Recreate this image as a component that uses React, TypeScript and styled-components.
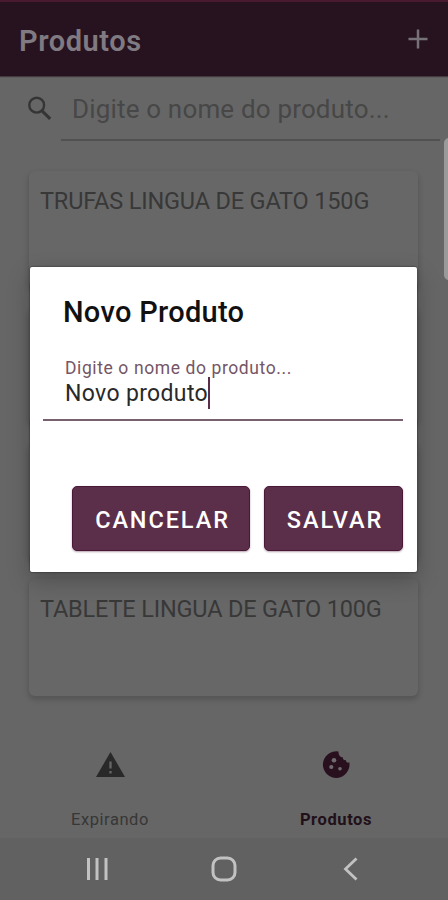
import React from "react";
import styled, { createGlobalStyle } from "styled-components";

const GlobalStyle = createGlobalStyle`
  * { box-sizing: border-box; }
  body { margin: 0; background: #666; font-family: Roboto, sans-serif; }
`;

const Screen = styled.div`
  position: relative;
  display: flex;
  flex-direction: column;
  width: 448px;
  height: 900px;
  overflow: hidden;
  background: #666;
`;

const AppBar = styled.header`
  display: flex;
  align-items: center;
  justify-content: space-between;
  flex: none;
  height: 76px;
  padding: 3px 19px 0 19px;
  border-top: 2px solid #491a2f;
  background: #26131f;
  box-shadow: 0 1px 1px #45383f;

  svg { margin-bottom: 4px; }
`;

const Title = styled.h1`
  margin: 0;
  color: #807a82;
  font-size: 29px;
  font-weight: 600;
  line-height: 36px;
  letter-spacing: 0.55px;
`;

const Search = styled.div`
  display: flex;
  flex: none;
  height: 65px;
  padding: 0 8px 0 27px;
`;

const SearchIcon = styled.svg`
  width: 26px;
  height: 26px;
  margin-top: 20px;
`;

const SearchField = styled.div`
  flex: 1;
  margin-left: 8px;
  padding: 17px 0 0 11px;
  border-bottom: 2px solid #515151;
  color: #474747;
  font-size: 26px;
  line-height: 32px;
  letter-spacing: 0.17px;
  white-space: nowrap;
`;

const ProductList = styled.main`
  display: flex;
  flex-direction: column;
  flex: none;
  gap: 19px;
  height: 555px;
  padding: 30px 30px 0 29px;
`;

const ProductCard = styled.article`
  flex: none;
  height: 117px;
  padding: 15px 11px;
  border-radius: 6px;
  background: #676767;
  box-shadow: 0 3px 5px 1px rgba(0, 0, 0, 0.16);
  color: #383838;
  font-size: 23.5px;
  line-height: 30px;
  letter-spacing: -0.17px;
  white-space: nowrap;
`;

const Tabs = styled.nav`
  display: grid;
  grid-template-columns: 220px 228px;
  flex: none;
  height: 142px;
`;

const Tab = styled.div<{ $active?: boolean }>`
  display: flex;
  flex-direction: column;
  align-items: center;
  padding: ${(p) => (p.$active ? "54px 0 0 4px" : "54px 0 0")};
  color: ${(p) => (p.$active ? "#211019" : "#373737")};
  font-size: 16.5px;
  font-weight: ${(p) => (p.$active ? 700 : 400)};
  line-height: 20px;
  letter-spacing: ${(p) => (p.$active ? "0.6px" : "0.55px")};

  svg { width: 30px; height: 30px; margin-bottom: 30px; }
`;

const SystemBar = styled.footer`
  display: flex;
  justify-content: space-between;
  align-items: center;
  flex: none;
  height: 62px;
  padding: 0 83px;
  background: #616161;

  svg { width: 28px; height: 28px; }
`;

const EdgeHandle = styled.div`
  position: absolute;
  top: 138px;
  right: -6px;
  width: 10px;
  height: 142px;
  border-radius: 6px;
  background: #9a9a9a;
`;

const Dialog = styled.section`
  position: absolute;
  top: 267px;
  left: 30px;
  width: 387px;
  height: 305px;
  padding: 28px 14px 0 13px;
  border-radius: 2px;
  background: #fff;
  box-shadow: 0 0 2px rgba(0, 0, 0, 0.7), 0 8px 22px rgba(0, 0, 0, 0.25);
`;

const DialogTitle = styled.h2`
  margin: 0 0 0 20px;
  color: #111;
  font-size: 29px;
  font-weight: 500;
  line-height: 34px;
  letter-spacing: 0.3px;
`;

const Field = styled.div`
  height: 92px;
  padding: 28px 0 0 22px;
  border-bottom: 2px solid #79606e;
`;

const FieldLabel = styled.label`
  display: block;
  color: #755566;
  font-size: 17.5px;
  line-height: 22px;
  letter-spacing: 0.6px;
`;

const FieldValue = styled.div`
  display: flex;
  align-items: center;
  height: 29px;
  color: #292929;
  font-size: 23px;
  letter-spacing: 0.35px;
`;

const Caret = styled.span`
  width: 2px;
  height: 32px;
  margin-top: -2px;
  background: #5b2d49;
`;

const Actions = styled.div`
  display: flex;
  justify-content: flex-end;
  gap: 14px;
  margin-top: 65px;
`;

const ActionButton = styled.button<{ $width: number }>`
  width: ${(p) => p.$width}px;
  height: 65px;
  padding: 2px 0 0 3px;
  border: 1px solid #4b1738;
  border-radius: 5px;
  background: #5b2e4a;
  box-shadow: 0 1px 2px rgba(70, 20, 50, 0.4);
  color: #fff;
  font: 500 23.5px/28px Roboto, sans-serif;
  letter-spacing: 1.9px;
`;

const products = ["TRUFAS LINGUA DE GATO 150G", "", "", "TABLETE LINGUA DE GATO 100G"];

export default function App() {
  return (
    <>
      <GlobalStyle />
      <Screen>
        <AppBar>
          <Title>Produtos</Title>
          <svg width="22" height="22" viewBox="0 0 22 22" stroke="#777278" strokeWidth="2.5">
            <path d="M11 1.5v19M1.5 11h19" />
          </svg>
        </AppBar>
        <Search>
          <SearchIcon viewBox="0 0 26 26" fill="none" stroke="#353535">
            <circle cx="9.7" cy="9.2" r="7.4" strokeWidth="2.4" />
            <path d="m15 14.8 8.2 8" strokeWidth="3.1" />
          </SearchIcon>
          <SearchField>Digite o nome do produto...</SearchField>
        </Search>
        <ProductList>
          {products.map((name, i) => (
            <ProductCard key={i}>{name}</ProductCard>
          ))}
        </ProductList>
        <Tabs>
          <Tab>
            <svg viewBox="0 0 30 30">
              <path d="M15.5 2 30 27H1Z" fill="#292929" />
              <path d="M15.5 11.5v7m0 2.5v2.5" stroke="#666" strokeWidth="2.3" />
            </svg>
            Expirando
          </Tab>
          <Tab $active>
            <svg viewBox="0 0 30 30">
              <path
                d="M17.5 1.5A13.3 13.3 0 1 0 28.3 12.3c-1.7 1-3.4-.1-3.5-2.2-2 .3-3.2-.9-2.9-2.9-2.7.4-4.6-2.6-4.4-5.7Z"
                fill="#28101e"
              />
              <g fill="#706b6e">
                <circle cx="13" cy="10.3" r="2.3" />
                <circle cx="10.3" cy="17" r="2.1" />
                <circle cx="19" cy="18.7" r="1.8" />
              </g>
            </svg>
            Produtos
          </Tab>
        </Tabs>
        <SystemBar>
          <svg viewBox="0 0 28 28" stroke="#c2c2c2" strokeWidth="3">
            <path d="M5.5 3v22M14 3v22M23 3v22" />
          </svg>
          <svg viewBox="0 0 28 28" fill="none" stroke="#c2c2c2" strokeWidth="3">
            <rect x="3" y="3" width="22" height="22" rx="7.5" />
          </svg>
          <svg viewBox="0 0 28 28" fill="none" stroke="#c2c2c2" strokeWidth="2.8">
            <path d="M19.5 3.5 8.5 14l11 10.5" />
          </svg>
        </SystemBar>
        <EdgeHandle />
        <Dialog>
          <DialogTitle>Novo Produto</DialogTitle>
          <Field>
            <FieldLabel>Digite o nome do produto...</FieldLabel>
            <FieldValue>
              Novo produto
              <Caret />
            </FieldValue>
          </Field>
          <Actions>
            <ActionButton $width={178}>CANCELAR</ActionButton>
            <ActionButton $width={139}>SALVAR</ActionButton>
          </Actions>
        </Dialog>
      </Screen>
    </>
  );
}
